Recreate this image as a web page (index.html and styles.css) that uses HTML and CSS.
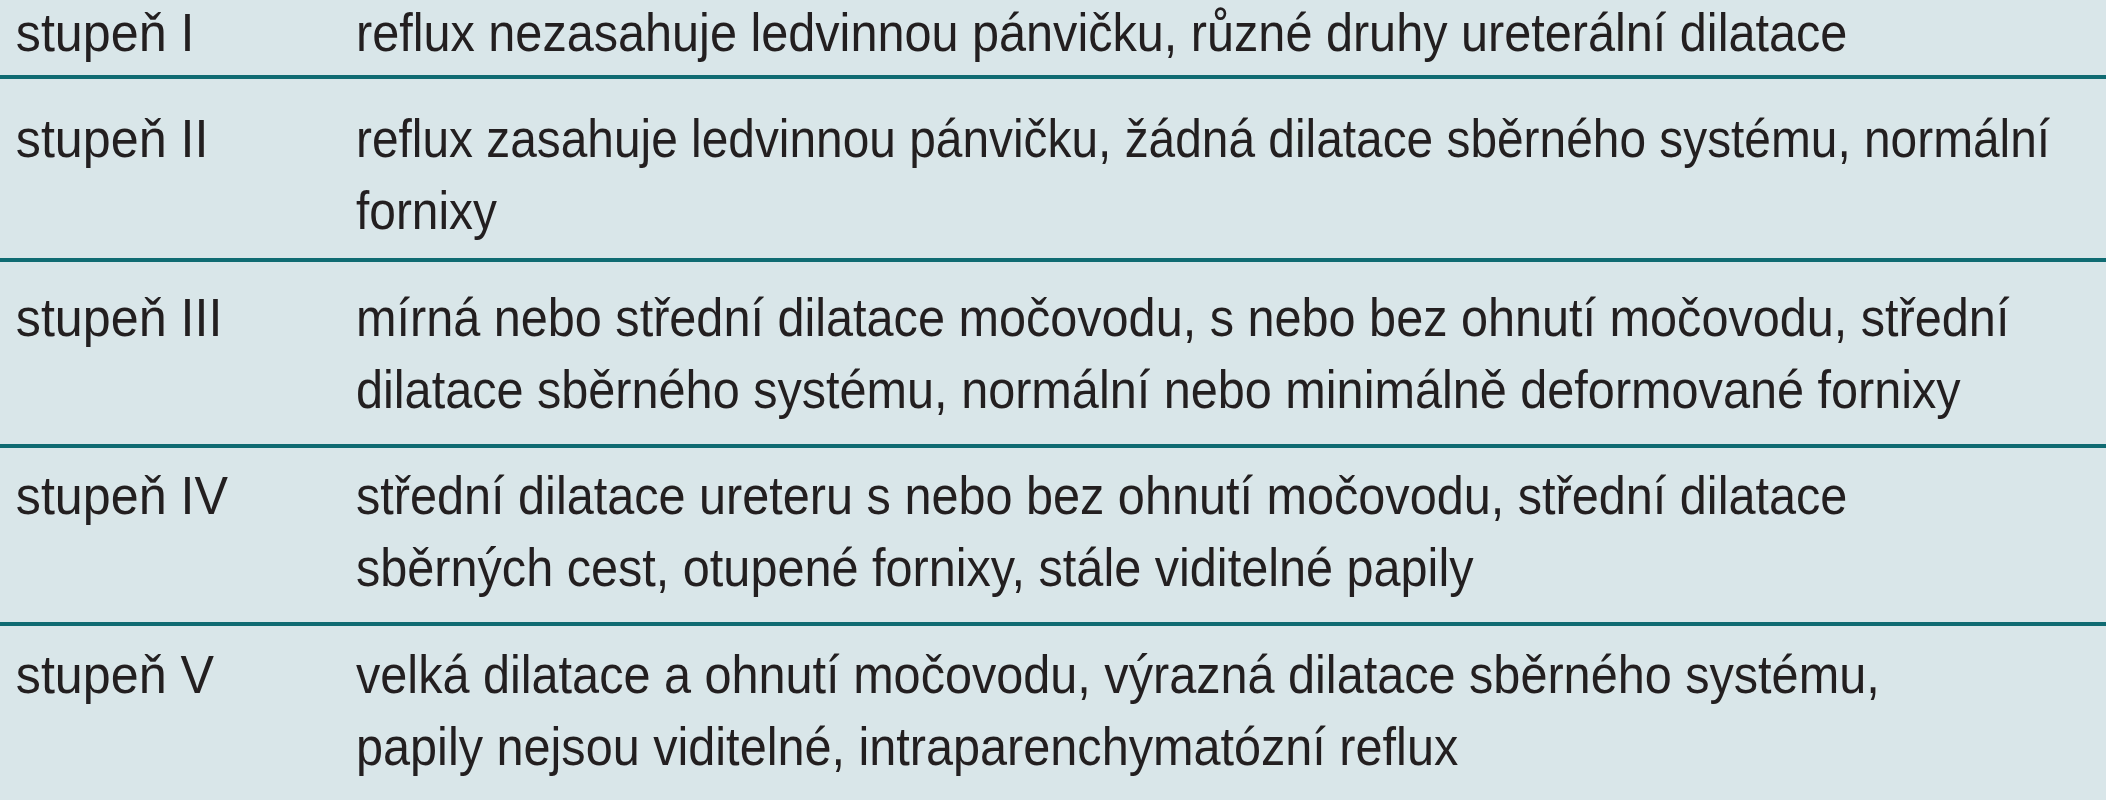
FILE: index.html
```html
<!DOCTYPE html>
<html lang="cs">
<head>
<meta charset="utf-8">
<title>Stupně refluxu</title>
<link rel="stylesheet" href="styles.css">
</head>
<body>
<div class="table">
  <div class="row r1">
    <div class="grade">stupeň I</div>
    <div class="desc">reflux nezasahuje ledvinnou pánvičku, různé druhy ureterální dilatace</div>
  </div>
  <div class="row r2">
    <div class="grade">stupeň II</div>
    <div class="desc">reflux zasahuje ledvinnou pánvičku, žádná dilatace sběrného systému, normální<br>fornixy</div>
  </div>
  <div class="row r3">
    <div class="grade">stupeň III</div>
    <div class="desc">mírná nebo střední dilatace močovodu, s nebo bez ohnutí močovodu, střední<br>dilatace sběrného systému, normální nebo minimálně deformované fornixy</div>
  </div>
  <div class="row r4">
    <div class="grade">stupeň IV</div>
    <div class="desc">střední dilatace ureteru s nebo bez ohnutí močovodu, střední dilatace<br>sběrných cest, otupené fornixy, stále viditelné papily</div>
  </div>
  <div class="row r5">
    <div class="grade">stupeň V</div>
    <div class="desc">velká dilatace a ohnutí močovodu, výrazná dilatace sběrného systému,<br>papily nejsou viditelné, intraparenchymatózní reflux</div>
  </div>
</div>
</body>
</html>
```
FILE: styles.css
```css
html, body {
  margin: 0;
  padding: 0;
  background: #d9e6e9;
}
body {
  overflow: hidden;
  height: 800px;
}
.table {
  margin-top: -4px;
  font-family: "Liberation Sans", Arial, sans-serif;
  font-size: 54px;
  line-height: 72px;
  color: #231f20;
}
.row {
  display: grid;
  grid-template-columns: 356px 1fr;
  border-bottom: 4px solid #0f6b72;
}
.row:last-child {
  border-bottom: none;
}
.grade,
.desc {
  white-space: nowrap;
  transform-origin: 0 0;
}
.grade {
  padding-left: 17px;
  transform: scaleX(0.93);
}
.desc {
  transform: scaleX(0.9);
}
.r2 .desc {
  transform: scaleX(0.886);
}
.r1 { padding: 0 0 7px; }
.r2 { padding: 23px 0 12px; }
.r3 { padding: 19px 0 19px; }
.r4 { padding: 11px 0 19px; }
.r5 { padding: 12px 0 0; }
```
